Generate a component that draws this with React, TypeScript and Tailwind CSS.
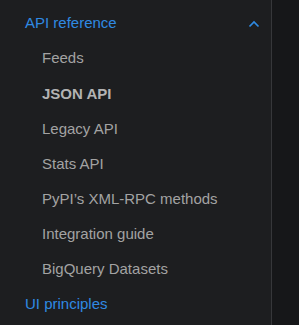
const items = [
  { label: "Feeds" },
  { label: "JSON API", active: true },
  { label: "Legacy API" },
  { label: "Stats API" },
  { label: "PyPI’s XML-RPC methods" },
  { label: "Integration guide" },
  { label: "BigQuery Datasets" },
];

export default function App() {
  return (
    <div
      className="flex h-[325px] w-[299px] overflow-hidden bg-[#161719]"
      style={{ fontFamily: '"Liberation Sans", Arial, sans-serif' }}
    >
      <nav className="w-[272px] shrink-0 border-r border-[#36373a] bg-[#1d1e20] pt-[13px]">
        <div className="flex h-[21px] items-center justify-between pl-[25px] pr-[11px]">
          <span className="text-[15px] text-[#2f8ae3]">API reference</span>
          <svg width="12" height="8" viewBox="0 0 12 8" fill="none" className="mt-[1px]">
            <path d="M1.5 6.5 L6 2 L10.5 6.5" stroke="#2f8ae3" strokeWidth="1.7" />
          </svg>
        </div>
        <ul className="mt-[7px] flex flex-col">
          {items.map((item) => (
            <li
              key={item.label}
              className={`flex h-[35.2px] items-center pl-[42px] text-[15px] ${
                item.active ? "font-bold text-[#b3b3b3]" : "text-[#a3a3a3]"
              }`}
            >
              {item.label}
            </li>
          ))}
        </ul>
        <div className="mt-[6px] flex h-[21px] items-center pl-[25px] text-[15px] text-[#2f8ae3]">
          UI principles
        </div>
      </nav>
      <div className="flex-1" />
    </div>
  );
}
